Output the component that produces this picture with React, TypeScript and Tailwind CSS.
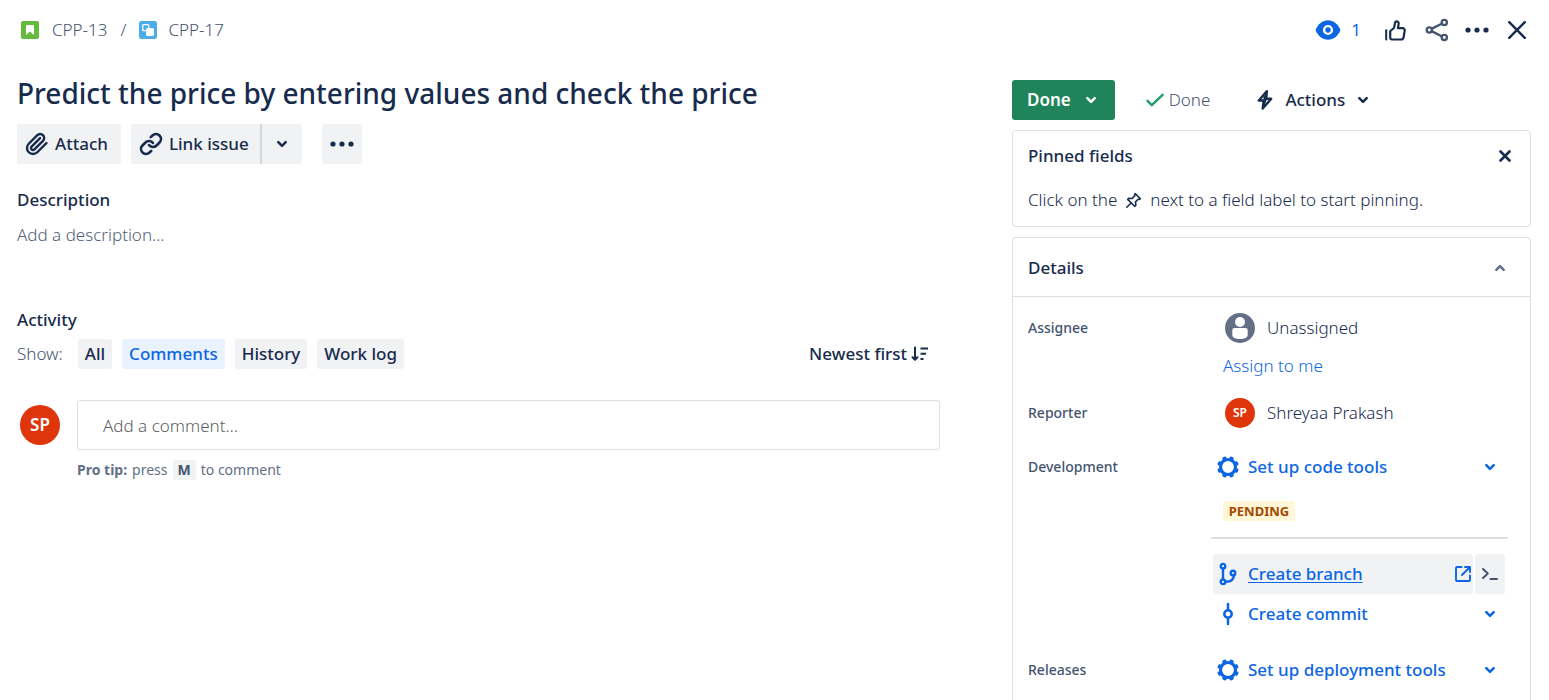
import type { ReactNode } from "react";

const stroke = {
  fill: "none",
  stroke: "currentColor",
  strokeLinecap: "round" as const,
  strokeLinejoin: "round" as const,
};

function StoryIcon() {
  return (
    <svg width="18" height="18" viewBox="0 0 18 18" aria-hidden="true">
      <rect width="18" height="18" rx="2" fill="#63ba3c" />
      <path d="M6 4h6a1 1 0 0 1 1 1v9l-4-3.600L5 14V5a1 1 0 0 1 1-1z" fill="#fff" />
    </svg>
  );
}

function SubtaskIcon() {
  return (
    <svg width="18" height="18" viewBox="0 0 18 18" aria-hidden="true">
      <rect width="18" height="18" rx="2.5" fill="#4bade8" />
      <rect x="3.700" y="3.700" width="6" height="6" rx="1" fill="none" stroke="#fff" strokeWidth="1.300" />
      <rect x="7" y="7" width="8" height="8" rx="1.600" fill="#fff" />
    </svg>
  );
}

function EyeIcon() {
  return (
    <svg width="26" height="20" viewBox="0 0 26 20" aria-hidden="true">
      <path d="M.5 10C3 4 7.500 .2 13 .2S23 4 25.500 10C23 16 18.500 19.800 13 19.800S3 16 .5 10z" fill="currentColor" />
      <circle cx="13" cy="10" r="3.900" fill="currentColor" stroke="#fff" strokeWidth="2.400" />
    </svg>
  );
}

function ThumbIcon() {
  return (
    <svg width="21" height="21" viewBox="0 0 21 21" aria-hidden="true" {...stroke} strokeWidth="2.200">
      <path d="M1.200 10.200v9.300" strokeWidth="2" />
      <path d="M5.200 17.800v-6.600l3.900-3.500c.4-1.200.4-2.500.7-3.900.3-1.600 1-2.500 2-2.400 1.500.1 2.100 1.400 1.800 3L12.900 8.200h4.800a2 2 0 0 1 2 2.300l-1.100 6.800a2.600 2.600 0 0 1-2.500 2.200H7a1.800 1.800 0 0 1-1.800-1.700z" />
    </svg>
  );
}

function ShareIcon() {
  return (
    <svg width="24" height="24" viewBox="0 0 24 24" aria-hidden="true" {...stroke} strokeWidth="2.300">
      <circle cx="4.300" cy="12" r="2.600" />
      <circle cx="19.300" cy="4.500" r="2.600" />
      <circle cx="19.300" cy="19.500" r="2.600" />
      <path d="m7 10.600 9.700-4.900M7 13.400l9.700 4.900" />
    </svg>
  );
}

function DotsIcon() {
  return (
    <svg width="24" height="6" viewBox="0 0 24 6" fill="currentColor" aria-hidden="true">
      <circle cx="3" cy="3" r="2.600" />
      <circle cx="12" cy="3" r="2.600" />
      <circle cx="21" cy="3" r="2.600" />
    </svg>
  );
}

function CloseIcon() {
  return (
    <svg width="20" height="20" viewBox="0 0 20 20" aria-hidden="true" {...stroke} strokeWidth="2.400">
      <path d="m2.200 2.200 15.600 15.600M17.800 2.200 2.200 17.800" />
    </svg>
  );
}

function SmallCloseIcon() {
  return (
    <svg width="12" height="12" viewBox="0 0 12 12" aria-hidden="true" {...stroke} strokeWidth="2.600">
      <path d="m1.500 1.500 9 9M10.500 1.500l-9 9" />
    </svg>
  );
}

function ChevronDown() {
  return (
    <svg width="12" height="8" viewBox="0 0 12 8" aria-hidden="true" {...stroke} strokeWidth="2.500">
      <path d="m2.300 2.200 3.700 3.700 3.700-3.700" />
    </svg>
  );
}

function ChevronUp() {
  return (
    <svg width="12" height="8" viewBox="0 0 12 8" aria-hidden="true" {...stroke} strokeWidth="2.500">
      <path d="M2.300 5.800 6 2.100l3.700 3.700" />
    </svg>
  );
}

function AttachIcon() {
  return (
    <svg width="24" height="24" viewBox="0 0 24 24" aria-hidden="true" {...stroke} strokeWidth="2.400">
      <path d="m21.440 11.050-9.190 9.190a6 6 0 0 1-8.490-8.490l8.570-8.570A4 4 0 1 1 18 8.840l-8.590 8.570a2 2 0 0 1-2.830-2.830l8.490-8.480" />
    </svg>
  );
}

function LinkIcon() {
  return (
    <svg width="24" height="24" viewBox="0 0 24 24" aria-hidden="true" {...stroke} strokeWidth="2.600">
      <path d="M10 13a5 5 0 0 0 7.540.540l3-3a5 5 0 0 0-7.070-7.070l-1.720 1.710" />
      <path d="M14 11a5 5 0 0 0-7.540-.540l-3 3a5 5 0 0 0 7.070 7.070l1.710-1.710" />
    </svg>
  );
}

function CheckIcon() {
  return (
    <svg width="20" height="14" viewBox="0 0 20 14" aria-hidden="true" {...stroke} strokeWidth="2.500">
      <path d="m2.500 7.800 4.300 4.300L17.600 1.800" />
    </svg>
  );
}

function BoltIcon() {
  return (
    <svg width="16" height="22" viewBox="0 0 16 22" aria-hidden="true" {...stroke} strokeWidth="2.400">
      <path d="M9.800 2.300 1.800 11.500h4.900L5.700 19.500 14.200 9.800H9.200z" />
      <path d="m9.800 2.300-3.100 9.200M9.200 9.800 5.700 19.500M7 8l2 2.800" strokeWidth="1.600" />
    </svg>
  );
}

function PinIcon() {
  return (
    <svg width="17" height="17" viewBox="0 0 17 17" aria-hidden="true" {...stroke} strokeWidth="1.600">
      <path d="m10.200 1.600 5.200 5.200-1.300.7-1-.2-2.600 2.600.3 3.400-1.200 1-6.900-6.900 1-1.200 3.400.3 2.600-2.600-.2-1z" />
      <path d="m5.800 11.200-4 4" />
    </svg>
  );
}

function SortIcon() {
  return (
    <svg width="18" height="16" viewBox="0 0 18 16" aria-hidden="true" {...stroke} strokeWidth="2">
      <path d="M4 1.500v12M1.500 11.200 4 13.700l2.500-2.500" />
      <path d="M9.500 2.500H17M9.500 7.700H15M9.500 13h3" strokeLinecap="butt" />
    </svg>
  );
}

function PersonIcon() {
  return (
    <svg width="30" height="30" viewBox="0 0 30 30" aria-hidden="true">
      <circle cx="15" cy="15" r="15" fill="#626f86" />
      <circle cx="15" cy="9" r="5" fill="#fff" />
      <path d="M9.500 15h11a2.200 2.200 0 0 1 2.200 2.200v4.500c0 3-3.400 4.300-7.700 4.300s-7.700-1.300-7.700-4.300v-4.500A2.200 2.200 0 0 1 9.500 15z" fill="#fff" />
    </svg>
  );
}

function GearIcon() {
  return (
    <svg width="24" height="24" viewBox="0 0 24 24" aria-hidden="true" {...stroke}>
      <circle cx="12" cy="12" r="7.500" strokeWidth="3.200" />
      {[22.5, 67.5, 112.5, 157.5, 202.5, 247.5, 292.5, 337.5].map((angle) => (
        <path key={angle} d="M11.300 2.600h1.400" strokeWidth="3" transform={`rotate(${angle} 12 12)`} />
      ))}
    </svg>
  );
}

function BranchIcon() {
  return (
    <svg width="24" height="24" viewBox="0 0 24 24" aria-hidden="true" {...stroke} strokeWidth="2.400">
      <circle cx="7" cy="4.200" r="2.300" />
      <circle cx="7" cy="19.800" r="2.300" />
      <circle cx="17" cy="11" r="2.300" />
      <path d="M7 6.800v10.600M18 13c0 4-3 6.700-8.500 6.700" />
    </svg>
  );
}

function CommitIcon() {
  return (
    <svg width="24" height="24" viewBox="0 0 24 24" aria-hidden="true" {...stroke} strokeWidth="2.500">
      <circle cx="12" cy="12" r="3.700" />
      <path d="M12 2v6M12 16v6" />
    </svg>
  );
}

function ExternalIcon() {
  return (
    <svg width="18" height="18" viewBox="0 0 18 18" aria-hidden="true" {...stroke} strokeWidth="1.900">
      <path d="M7.500 2H3a1 1 0 0 0-1 1v12a1 1 0 0 0 1 1h12a1 1 0 0 0 1-1v-4.500M11 2h5v5M15.500 2.500 8 10" />
    </svg>
  );
}

function TerminalIcon() {
  return (
    <svg width="18" height="14" viewBox="0 0 18 14" aria-hidden="true" {...stroke} strokeWidth="2">
      <path d="m2 2 4.800 4.500L2 11M9.500 12H16" />
    </svg>
  );
}

const button = "flex items-center rounded-[3px] bg-[#f1f2f4] font-medium";

function FieldLabel({ children }: { children: ReactNode }) {
  return <dt className="w-[183px] shrink-0 text-sm leading-10 font-medium text-[#44546f]">{children}</dt>;
}

function ToolRow({ icon, label }: { icon: ReactNode; label: string }) {
  return (
    <div className="flex h-10 items-center font-medium text-[#0c66e4]">
      <a href="#tool" className="flex flex-1 items-center gap-2 pl-[5px]">
        {icon}
        {label}
      </a>
      <button type="button" aria-label={`${label} options`} className="flex h-10 w-[36px] items-center justify-center">
        <ChevronDown />
      </button>
    </div>
  );
}

function Header() {
  return (
    <header className="flex h-[60px] items-center justify-between pr-[22px] pl-[21px]">
      <nav aria-label="Breadcrumb" className="flex items-center text-[#44546f]">
        <StoryIcon />
        <a href="#cpp-13" className="ml-[13px]">CPP-13</a>
        <span className="mx-[13px]">/</span>
        <SubtaskIcon />
        <a href="#cpp-17" className="ml-[11px]">CPP-17</a>
      </nav>
      <div className="flex items-center">
        <button type="button" aria-label="Watchers" className="flex items-center gap-2.5 font-normal text-[#0c66e4]">
          <EyeIcon />
          <span>1</span>
        </button>
        <button type="button" aria-label="Like" className="ml-6"><ThumbIcon /></button>
        <button type="button" aria-label="Share" className="ml-[19px] text-[#44546f]"><ShareIcon /></button>
        <button type="button" aria-label="More" className="ml-4"><DotsIcon /></button>
        <button type="button" aria-label="Close" className="ml-[18px]"><CloseIcon /></button>
      </div>
    </header>
  );
}

const filters = ["All", "Comments", "History", "Work log"];

function IssueColumn() {
  return (
    <main className="min-w-0 flex-1">
      <h1 className="pt-[13px] text-[28px] leading-10 font-medium">
        Predict the price by entering values and check the price
      </h1>
      <div className="mt-[11px] flex h-10 items-stretch">
        <button type="button" className={`${button} gap-1.5 pr-[13px] pl-2`}>
          <AttachIcon />
          Attach
        </button>
        <button type="button" className={`${button} ml-2.5 gap-1.5 rounded-r-none pr-[11px] pl-2`}>
          <LinkIcon />
          Link issue
        </button>
        <button type="button" aria-label="Link options" className={`${button} w-[42px] justify-center rounded-l-none border-l-2 border-[#d0d4db]`}>
          <ChevronDown />
        </button>
        <button type="button" aria-label="More actions" className={`${button} ml-5 w-10 justify-center`}>
          <DotsIcon />
        </button>
      </div>

      <h2 className="mt-6 leading-6 font-medium">Description</h2>
      <p className="mt-[11px] leading-6 text-[#505f79]">Add a description...</p>

      <h2 className="mt-[61px] leading-6 font-medium">Activity</h2>
      <div className="mt-[7px] flex h-[30px] items-center justify-between pr-[11px]">
        <div className="flex items-center gap-2.5">
          <span className="mr-[5px] text-[#44546f]">Show:</span>
          {filters.map((name) => (
            <button
              key={name}
              type="button"
              aria-pressed={name === "Comments"}
              className={
                name === "Comments"
                  ? "h-[30px] rounded-[3px] bg-[#e9f2ff] px-[7px] font-medium text-[#0c66e4]"
                  : "h-[30px] rounded-[3px] bg-[#f1f2f4] px-[7px] font-medium"
              }
            >
              {name}
            </button>
          ))}
        </div>
        <button type="button" className="flex items-center gap-1 font-medium">
          Newest first
          <SortIcon />
        </button>
      </div>

      <div className="mt-[31px] flex items-start pl-[3px]">
        <span className="mt-[5px] flex h-10 w-10 shrink-0 items-center justify-center rounded-full bg-[#de350b] font-semibold text-white">
          SP
        </span>
        <div className="ml-[17px] min-w-0 flex-1">
          <input
            type="text"
            aria-label="Add a comment"
            placeholder="Add a comment…"
            className="block h-[50px] w-full rounded-[3px] border border-[#dcdfe4] px-[25px] placeholder:text-[#5e5e5e]"
          />
          <p className="mt-2.5 flex h-5 items-center text-sm font-normal text-[#626f86]">
            <b className="font-bold">Pro tip:</b>
            <span className="ml-[5px]">press</span>
            <kbd className="mx-[5px] flex h-5 items-center rounded-[3px] bg-[#f1f2f4] px-[5px] text-sm font-bold text-[#44546f] [font-family:inherit]">M</kbd>
            to comment
          </p>
        </div>
      </div>
    </main>
  );
}

function DetailsColumn() {
  return (
    <aside className="flex w-[519px] shrink-0 flex-col pt-5">
      <div className="flex h-10 items-center">
        <button type="button" className="flex h-10 items-center gap-[14px] rounded-[3px] bg-[#1f845a] pr-[18px] pl-[15px] font-semibold text-white">
          Done
          <ChevronDown />
        </button>
        <span className="ml-[30px] flex items-center gap-1 text-[#44546f]">
          <span className="text-[#22a06b]"><CheckIcon /></span>
          Done
        </span>
        <button type="button" className="ml-[47px] flex items-center gap-3 font-medium">
          <BoltIcon />
          Actions
          <ChevronDown />
        </button>
      </div>

      <section className="mt-2.5 rounded-[4px] border border-[#dcdfe4] pt-[13px] pr-[19px] pb-3.5 pl-[15px]">
        <div className="flex h-6 items-center justify-between">
          <h2 className="font-medium">Pinned fields</h2>
          <button type="button" aria-label="Dismiss"><SmallCloseIcon /></button>
        </div>
        <p className="mt-5 flex h-6 items-center">
          Click on the
          <span className="mx-2"><PinIcon /></span>
          next to a field label to start pinning.
        </p>
      </section>

      <section className="mt-2.5 flex-1 rounded-t-[4px] border border-b-0 border-[#dcdfe4]">
        <div className="flex h-[59px] items-center justify-between border-b border-[#dcdfe4] pt-0.5 pr-6 pl-[15px]">
          <h2 className="font-medium">Details</h2>
          <button type="button" aria-label="Collapse details" className="text-[#626f86]"><ChevronUp /></button>
        </div>
        <dl className="pt-[11px] pr-[22px] pl-[15px]">
          <div className="flex">
            <FieldLabel>Assignee</FieldLabel>
            <dd className="flex-1">
              <div className="flex h-10 items-center gap-3 pl-[14px]">
                <PersonIcon />
                Unassigned
              </div>
              <a href="#assign" className="ml-3 block h-9 leading-9 text-[#0c66e4]">Assign to me</a>
            </dd>
          </div>
          <div className="mt-[9px] flex">
            <FieldLabel>Reporter</FieldLabel>
            <dd className="flex h-10 flex-1 items-center gap-3 pl-[14px]">
              <span className="flex h-[30px] w-[30px] items-center justify-center rounded-full bg-[#de350b] text-xs font-semibold text-white">SP</span>
              Shreyaa Prakash
            </dd>
          </div>
          <div className="mt-3.5 flex">
            <FieldLabel>Development</FieldLabel>
            <dd className="flex-1">
              <ToolRow icon={<GearIcon />} label="Set up code tools" />
              <span className="mt-3.5 ml-3 flex h-5 w-[72px] items-center justify-center rounded-[3px] bg-[#fff7d6] text-[13px] font-bold text-[#a54800]">
                PENDING
              </span>
              <hr className="mt-4 border-t-2 border-[#dcdfe4]" />
              <div className="mt-[15px] flex gap-0.5 pr-[3px] pl-0.5 font-medium text-[#0c66e4]">
                <a href="#branch" className="flex h-10 flex-1 items-center gap-2 rounded-[3px] bg-[#f1f2f4] pr-px pl-[3px]">
                  <BranchIcon />
                  <span className="flex-1 underline underline-offset-2">Create branch</span>
                  <ExternalIcon />
                </a>
                <button type="button" aria-label="Copy branch command" className={`${button} w-[30px] justify-center text-[#44546f]`}>
                  <TerminalIcon />
                </button>
              </div>
              <ToolRow icon={<CommitIcon />} label="Create commit" />
            </dd>
          </div>
          <div className="mt-4 flex">
            <FieldLabel>Releases</FieldLabel>
            <dd className="flex-1">
              <ToolRow icon={<GearIcon />} label="Set up deployment tools" />
            </dd>
          </div>
        </dl>
      </section>
    </aside>
  );
}

export default function App() {
  return (
    <div className="flex min-h-screen flex-col bg-white text-[17px] leading-6 font-light text-[#172b4d] [font-family:'Noto_Sans','Open_Sans',sans-serif]">
      <Header />
      <div className="flex flex-1 gap-[72px] pr-[18px] pl-[17px]">
        <IssueColumn />
        <DetailsColumn />
      </div>
    </div>
  );
}
